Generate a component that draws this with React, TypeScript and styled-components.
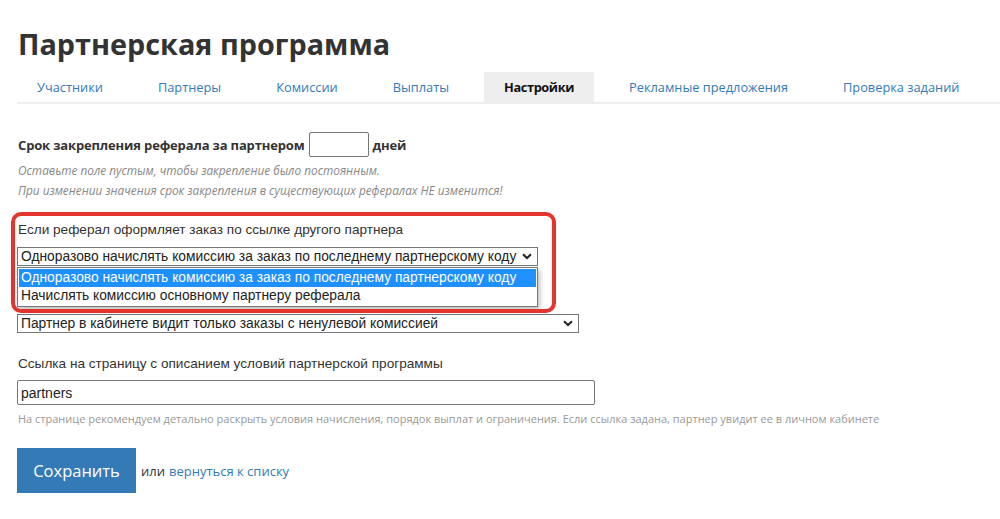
import styled, { createGlobalStyle } from 'styled-components'

const GlobalStyle = createGlobalStyle`
  body {
    margin: 0;
    background: #fff;
    color: #333;
    font-family: 'Open Sans', 'Liberation Sans', sans-serif;
  }
`

const Page = styled.div`
  padding-left: 17px;
`

const Title = styled.h1`
  margin: 0;
  padding-top: 24px;
  padding-left: 1px;
  font-size: 28.8px;
  line-height: 40px;
  font-weight: 700;
  color: #333;
`

const Tabs = styled.div`
  display: flex;
  margin-top: 8px;
  border-bottom: 2px solid #eee;
`

const Tab = styled.div<{ $active?: boolean }>`
  height: 30px;
  line-height: 30px;
  padding: 0 20px;
  margin-right: 15px;
  font-size: 12.8px;
  white-space: nowrap;
  color: ${(p) => (p.$active ? '#111' : '#337ab7')};
  font-weight: ${(p) => (p.$active ? 700 : 400)};
  letter-spacing: ${(p) => (p.$active ? '-0.4px' : '0')};
  background: ${(p) => (p.$active ? '#eee' : 'transparent')};
`

const Form = styled.div`
  padding-top: 28px;
`

const TermRow = styled.div`
  display: flex;
  align-items: center;
  gap: 4px;
  font-size: 13px;
  letter-spacing: -0.15px;
  font-weight: 700;
  padding-left: 1px;
`

const SmallInput = styled.div`
  width: 58px;
  height: 23px;
  border: 1px solid #767676;
  border-radius: 2px;
`

const Hint = styled.div<{ $italic?: boolean }>`
  font-size: ${(p) => (p.$italic ? 11.8 : 11)}px;
  line-height: 20px;
  padding-left: 1px;
  color: ${(p) => (p.$italic ? '#888' : '#999')};
  font-style: ${(p) => (p.$italic ? 'italic' : 'normal')};
`

const Label = styled.div<{ $top: number }>`
  margin-top: ${(p) => p.$top}px;
  font-family: 'Liberation Sans', sans-serif;
  font-size: 13.6px;
  line-height: 20px;
  padding-left: 1px;
  color: #333;
`

const Group = styled.div`
  position: relative;
`

const Highlight = styled.div`
  position: absolute;
  left: -6px;
  top: -8px;
  width: 537px;
  height: 93px;
  border: 4px solid #e3352d;
  border-radius: 10px;
  pointer-events: none;
  z-index: 3;
`

const Select = styled.div<{ $width: number; $top: number }>`
  position: relative;
  box-sizing: border-box;
  width: ${(p) => p.$width}px;
  height: 19px;
  margin-top: ${(p) => p.$top}px;
  border: 1px solid #767676;
  display: flex;
  align-items: center;
  justify-content: space-between;
  padding: 0 5px 0 3px;
  font-family: 'Liberation Sans', sans-serif;
  font-size: 13.8px;
  color: #222;
  white-space: nowrap;
`

const Options = styled.div`
  position: absolute;
  left: -1px;
  right: -1px;
  top: 19px;
  border: 1px solid #767676;
  background: #fff;
  box-shadow: 2px 3px 5px rgba(0, 0, 0, 0.25);
  padding: 1px;
  z-index: 2;
`

const Option = styled.div<{ $selected?: boolean }>`
  height: 18px;
  line-height: 18px;
  padding-left: 2px;
  background: ${(p) => (p.$selected ? '#1e90ff' : '#fff')};
  color: ${(p) => (p.$selected ? '#fff' : '#222')};
`

const TextInput = styled.div`
  box-sizing: border-box;
  width: 578px;
  height: 25px;
  margin-top: 6px;
  border: 1px solid #767676;
  border-radius: 2px;
  padding-left: 3px;
  display: flex;
  align-items: center;
  font-family: 'Liberation Sans', sans-serif;
  font-size: 14px;
  color: #222;
`

const Actions = styled.div`
  display: flex;
  align-items: center;
  margin-top: 19px;
  font-size: 13px;
`

const SaveButton = styled.button`
  width: 119px;
  height: 45px;
  border: none;
  background: #337ab7;
  color: #fff;
  font-family: 'Open Sans', sans-serif;
  font-size: 16.5px;
  margin-right: 5px;
`

const BackLink = styled.a`
  color: #337ab7;
  text-decoration: none;
  margin-left: 4px;
`

function Chevron() {
  return (
    <svg width='10' height='7' viewBox='0 0 10 7'>
      <path d='M1 1.2 L5 5 L9 1.2' fill='none' stroke='#222' strokeWidth='2' />
    </svg>
  )
}

const tabs = ['Участники', 'Партнеры', 'Комиссии', 'Выплаты', 'Настройки', 'Рекламные предложения', 'Проверка заданий']

export default function App() {
  return (
    <Page>
      <GlobalStyle />
      <Title>Партнерская программа</Title>
      <Tabs>
        {tabs.map((t) => (
          <Tab key={t} $active={t === 'Настройки'}>
            {t}
          </Tab>
        ))}
      </Tabs>
      <Form>
        <TermRow>
          Срок закрепления реферала за партнером
          <SmallInput />
          дней
        </TermRow>
        <Hint $italic style={{ marginTop: 3 }}>
          Оставьте поле пустым, чтобы закрепление было постоянным.
        </Hint>
        <Hint $italic>При изменении значения срок закрепления в существующих рефералах НЕ изменится!</Hint>
        <Group>
          <Label $top={20}>Если реферал оформляет заказ по ссылке другого партнера</Label>
          <Select $width={521} $top={7}>
            Одноразово начислять комиссию за заказ по последнему партнерскому коду
            <Chevron />
            <Options>
              <Option $selected>Одноразово начислять комиссию за заказ по последнему партнерскому коду</Option>
              <Option>Начислять комиссию основному партнеру реферала</Option>
            </Options>
          </Select>
          <Highlight />
        </Group>
        <Select $width={562} $top={48}>
          Партнер в кабинете видит только заказы с ненулевой комиссией
          <Chevron />
        </Select>
        <Label $top={21}>Ссылка на страницу с описанием условий партнерской программы</Label>
        <TextInput>partners</TextInput>
        <Hint style={{ marginTop: 4 }}>
          На странице рекомендуем детально раскрыть условия начисления, порядок выплат и ограничения. Если ссылка задана, партнер увидит ее в личном кабинете
        </Hint>
        <Actions>
          <SaveButton>Сохранить</SaveButton>
          или
          <BackLink href='#'>вернуться к списку</BackLink>
        </Actions>
      </Form>
    </Page>
  )
}
